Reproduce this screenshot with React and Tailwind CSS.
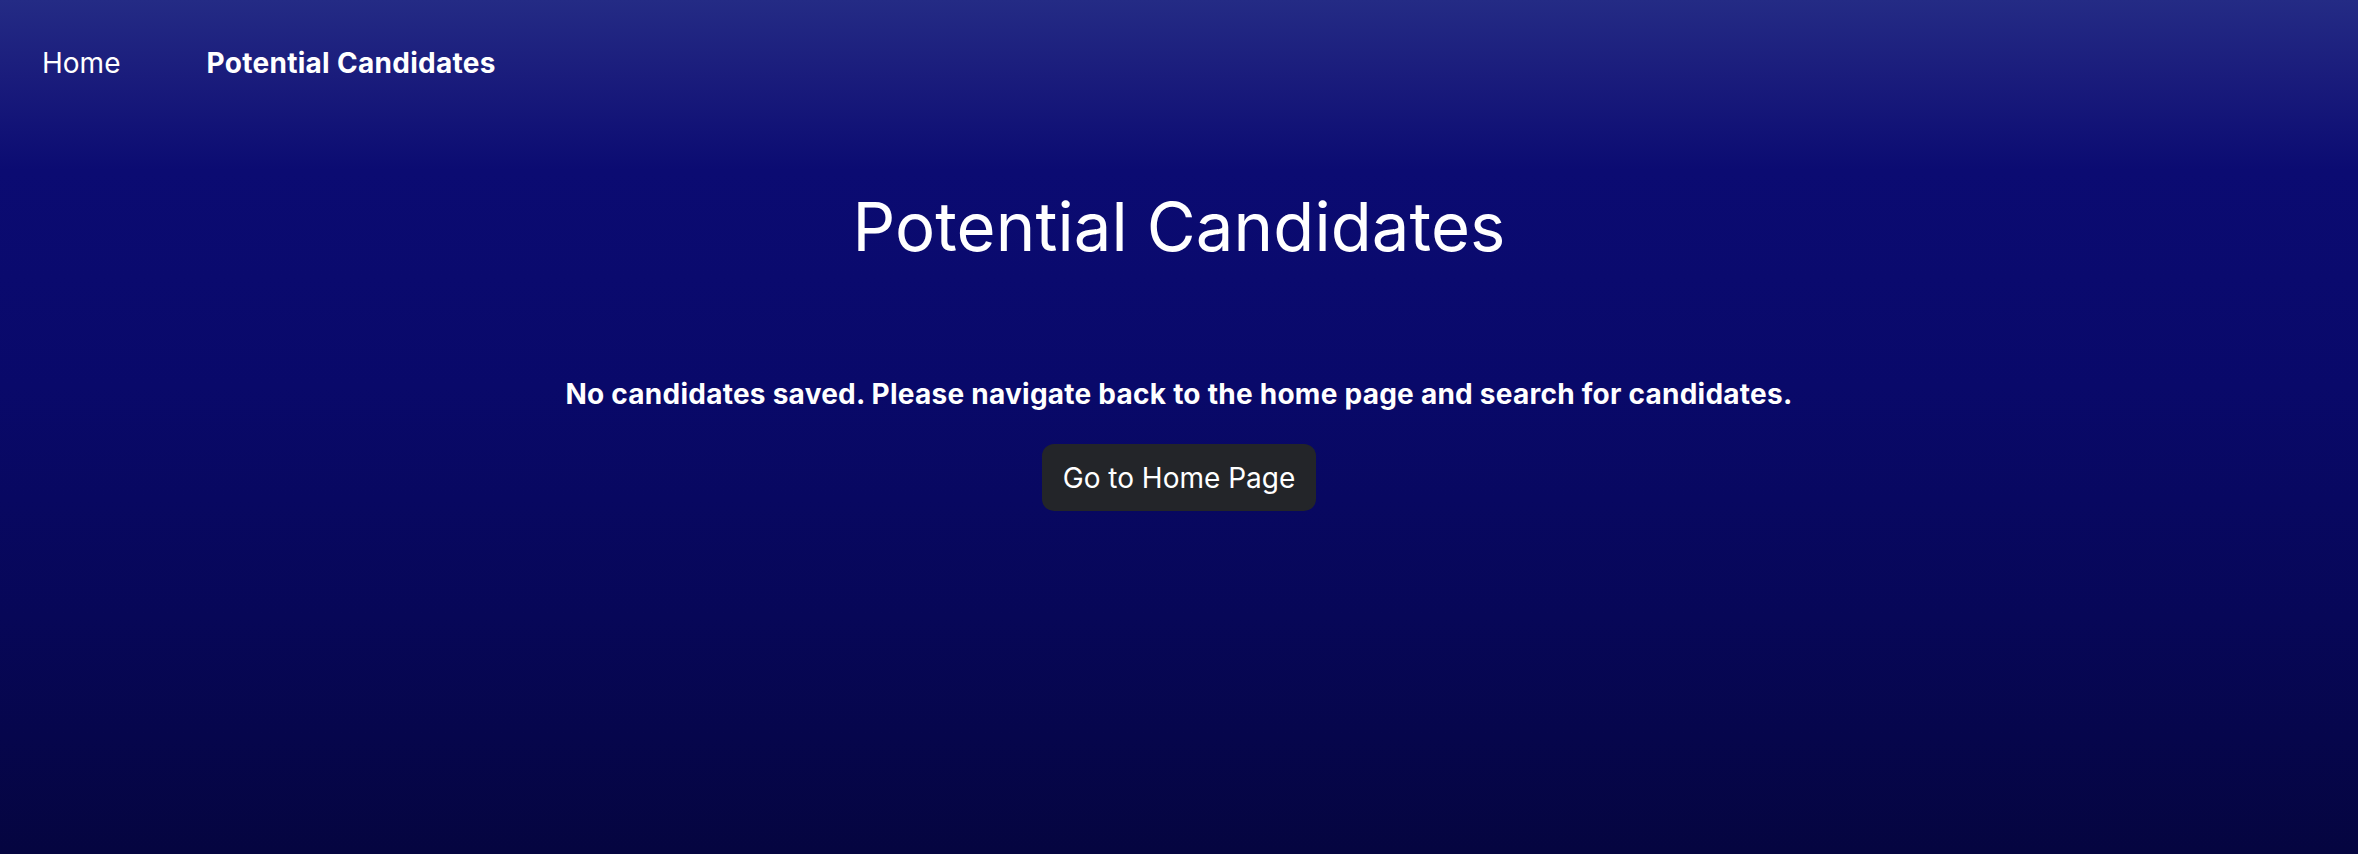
import React from "react";

const App = () => {
  return (
    <div className="min-h-[854px] w-full bg-[linear-gradient(to_bottom,#242b85_0%,#1a1c7c_9%,#0b0b72_20%,#09096a_45%,#070758_72%,#050540_100%)] text-white font-['Inter','Liberation_Sans',sans-serif]">
      {/* top nav */}
      <nav className="flex items-center gap-[86px] px-[42px] pt-[42px]">
        <a className="text-[28px] leading-[42px] font-normal">Home</a>
        <a className="text-[28px] leading-[42px] font-bold tracking-[0.3px]">Potential Candidates</a>
      </nav>

      <main className="flex flex-col items-center pt-[103px]">
        <h1 className="text-[67px] leading-[80px] font-normal tracking-[0.1px]">Potential Candidates</h1>

        <p className="mt-[106px] text-[28px] leading-[42px] font-bold tracking-[0.25px]">
          No candidates saved. Please navigate back to the home page and search for candidates.
        </p>

        <button className="mt-[29px] h-[67px] px-[21px] flex items-center rounded-[12px] bg-[#232529] text-[28px] leading-[42px] font-normal text-white">
          Go to Home Page
        </button>
      </main>
    </div>
  );
};

export default App;
